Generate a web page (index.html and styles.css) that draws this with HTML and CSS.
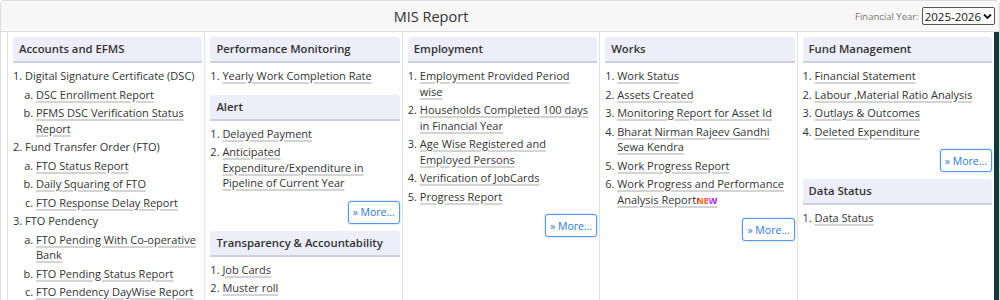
FILE: index.html
```html
<!DOCTYPE html>
<html lang="en">
<head>
    <link rel="stylesheet" href="styles.css">
</head>
<body>
    <div class="panel">
        <div class="panel-head">
            <div class="title">MIS Report</div>
            <div class="year">
                <span class="year-label">Financial Year:</span>
                <span class="year-select">2025-2026
                    <svg width="9" height="7" viewBox="0 0 9 7"><path d="M1 1.5 L4.5 5 L8 1.5" fill="none" stroke="#111" stroke-width="1.8"/></svg>
                </span>
            </div>
        </div>
        <div class="panel-body">
            <div class="columns">
                <div class="col">
                    <div class="section">
                        <div class="sec-title">Accounts and EFMS</div>
                        <ol class="items">
                            <li>Digital Signature Certificate (DSC)
                                <ol class="sub">
                                    <li><a href="#">DSC Enrollment Report</a></li>
                                    <li><a href="#">PFMS DSC Verification Status Report</a></li>
                                </ol>
                            </li>
                            <li>Fund Transfer Order (FTO)
                                <ol class="sub">
                                    <li><a href="#">FTO Status Report</a></li>
                                    <li><a href="#">Daily Squaring of FTO</a></li>
                                    <li><a href="#">FTO Response Delay Report</a></li>
                                </ol>
                            </li>
                            <li>FTO Pendency
                                <ol class="sub">
                                    <li><a href="#">FTO Pending With Co-operative Bank</a></li>
                                    <li><a href="#">FTO Pending Status Report</a></li>
                                    <li><a href="#">FTO Pendency DayWise Report</a></li>
                                </ol>
                            </li>
                        </ol>
                    </div>
                </div>
                <div class="col">
                    <div class="section">
                        <div class="sec-title">Performance Monitoring</div>
                        <ol class="items">
                            <li><a href="#">Yearly Work Completion Rate</a></li>
                        </ol>
                    </div>
                    <div class="section">
                        <div class="sec-title">Alert</div>
                        <ol class="items">
                            <li><a href="#">Delayed Payment</a></li>
                            <li><a href="#">Anticipated Expenditure/Expenditure in Pipeline of Current Year</a></li>
                        </ol>
                        <div class="more-row"><button class="more">&raquo; More...</button></div>
                    </div>
                    <div class="section">
                        <div class="sec-title">Transparency &amp; Accountability</div>
                        <ol class="items">
                            <li><a href="#">Job Cards</a></li>
                            <li><a href="#">Muster roll</a></li>
                            <li><a href="#">Wage List</a></li>
                        </ol>
                    </div>
                </div>
                <div class="col">
                    <div class="section">
                        <div class="sec-title">Employment</div>
                        <ol class="items">
                            <li><a href="#">Employment Provided Period wise</a></li>
                            <li><a href="#">Households Completed 100 days in Financial Year</a></li>
                            <li><a href="#">Age Wise Registered and Employed Persons</a></li>
                            <li><a href="#">Verification of JobCards</a></li>
                            <li><a href="#">Progress Report</a></li>
                        </ol>
                        <div class="more-row"><button class="more">&raquo; More...</button></div>
                    </div>
                </div>
                <div class="col">
                    <div class="section">
                        <div class="sec-title">Works</div>
                        <ol class="items">
                            <li><a href="#">Work Status</a></li>
                            <li><a href="#">Assets Created</a></li>
                            <li><a href="#">Monitoring Report for Asset Id</a></li>
                            <li><a href="#">Bharat Nirman Rajeev Gandhi Sewa Kendra</a></li>
                            <li><a href="#">Work Progress Report</a></li>
                            <li><a href="#">Work Progress and Performance Analysis Report<span class="new">NEW</span></a></li>
                        </ol>
                        <div class="more-row"><button class="more">&raquo; More...</button></div>
                    </div>
                </div>
                <div class="col">
                    <div class="section">
                        <div class="sec-title">Fund Management</div>
                        <ol class="items">
                            <li><a href="#">Financial Statement</a></li>
                            <li><a href="#">Labour ,Material Ratio Analysis</a></li>
                            <li><a href="#">Outlays &amp; Outcomes</a></li>
                            <li><a href="#">Deleted Expenditure</a></li>
                        </ol>
                        <div class="more-row"><button class="more">&raquo; More...</button></div>
                    </div>
                    <div class="section">
                        <div class="sec-title">Data Status</div>
                        <ol class="items">
                            <li><a href="#">Data Status</a></li>
                        </ol>
                    </div>
                </div>
            </div>
            <div class="edge"></div>
        </div>
    </div>
</body>
</html>
```

FILE: styles.css
```css
body {
    margin: 0;
    font-family: "Open Sans", "Noto Sans", sans-serif;
    color: #333;
    background-color: #fff;
    height: 300px;
    overflow: hidden;
}
.panel {
    border: 1px solid #ddd;
    border-radius: 4px;
    height: 320px;
}
.panel-head {
    display: flex;
    align-items: center;
    height: 30px;
    background-color: #f7f7f7;
    border-bottom: 1px solid #ddd;
    border-radius: 4px 4px 0 0;
}
.title {
    flex: 1;
    text-align: center;
    font-size: 14.5px;
    color: #333;
    padding-left: 6px;
}
.year {
    display: flex;
    align-items: center;
    gap: 3px;
    padding-right: 4px;
}
.year-label {
    font-size: 9.5px;
    color: #777;
}
.year-select {
    display: flex;
    align-items: center;
    gap: 2px;
    border: 1px solid #555;
    border-radius: 2px;
    padding: 0 2px;
    height: 16px;
    font-size: 11.5px;
    color: #111;
    background-color: #fff;
}
.panel-body {
    display: flex;
    height: 100%;
}
.columns {
    flex: 1;
    display: grid;
    grid-template-columns: repeat(5, 1fr);
    padding-left: 6px;
    background-color: #fff;
}
.edge {
    width: 5px;
    background-color: #123a3c;
}
.col {
    border-left: 1px solid #e2e2e2;
    padding: 5px 2px 0 5px;
}
.sec-title {
    background-color: #eeeefb;
    border-bottom: 2px solid #cfcfe0;
    border-radius: 3px 3px 0 0;
    font-size: 11.3px;
    font-weight: 600;
    padding: 5px 6px;
    height: 14px;
    line-height: 14px;
}
.items {
    margin: 5px 0 11px 0;
    padding: 0 5px 0 12px;
    font-size: 11px;
    line-height: 15.5px;
}
.items li {
    margin-bottom: 3px;
}
.sub {
    list-style-type: lower-alpha;
    padding-left: 11px;
    padding-right: 0;
    margin: 3px 0 0 0;
}
.items a {
    color: #333;
    text-decoration: underline;
    text-decoration-color: #d4d4d4;
    text-decoration-thickness: 2px;
    text-underline-offset: 2px;
}
.more-row {
    display: flex;
    justify-content: flex-end;
    margin-top: -1px;
    margin-bottom: 7px;
}
.more {
    font-family: "Open Sans", sans-serif;
    font-size: 10.5px;
    color: #2a78e4;
    background-color: #fff;
    border: 1px solid #5796f2;
    border-radius: 3px;
    padding: 3px 4px;
    height: 23px;
    box-shadow: 0 0 2px rgba(70, 140, 240, 0.6);
}
.new {
    font-size: 9px;
    font-weight: 800;
    letter-spacing: -0.2px;
    background: linear-gradient(90deg, #ff2030, #ff8a00, #e040ff, #8a30ff);
    -webkit-background-clip: text;
    background-clip: text;
    color: transparent;
}
```
